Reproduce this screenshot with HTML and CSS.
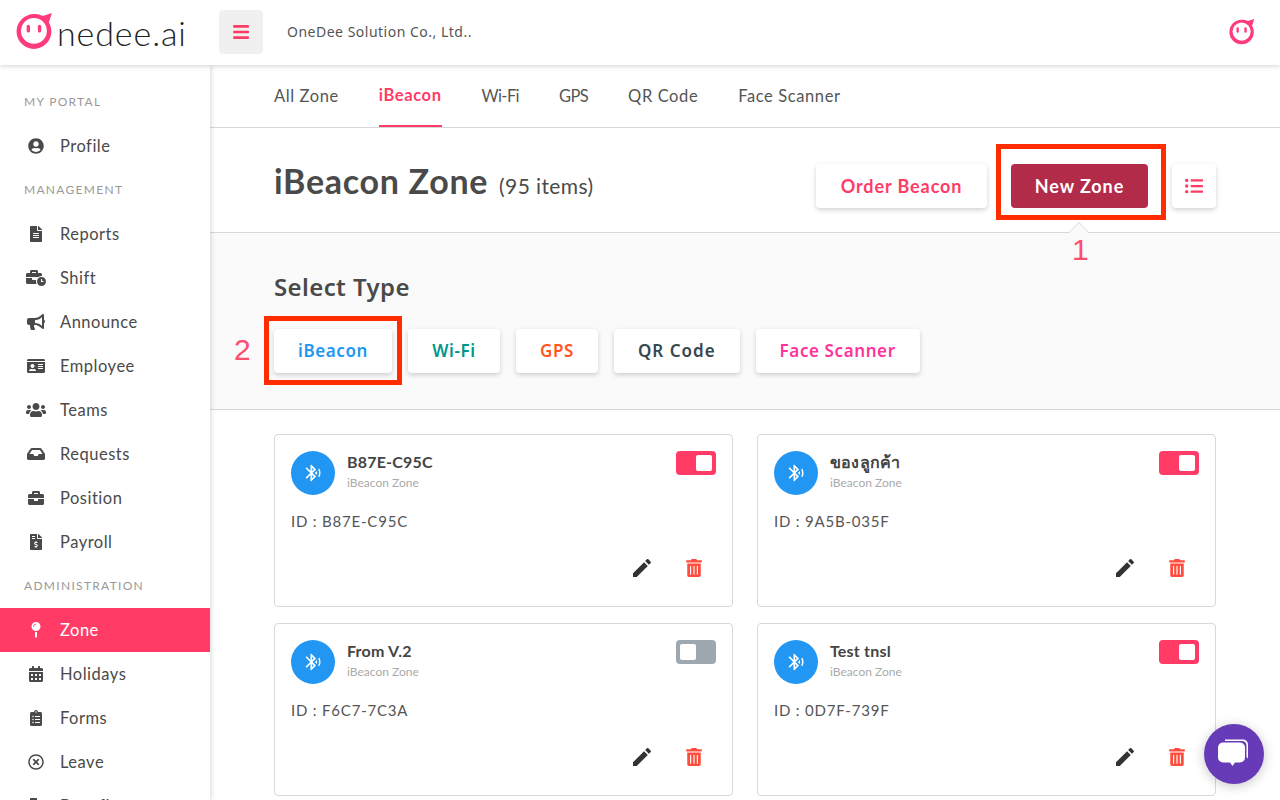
FILE: index.html
```html
<!DOCTYPE html>
<html lang="en">
<head>
  <meta charset="UTF-8" />
  <title>iBeacon Zone</title>
  <link rel="stylesheet" href="styles.css">
</head>
<body>
  <svg class="defs" width="0" height="0">
    <symbol id="i-face" viewBox="4 3 33 33">
      <path d="M20 4a15.500 15.500 0 1 0 15.500 15.500c0-3-.8-5.700-2.200-8l2.700-8.500-8 2.600A15.500 15.500 0 0 0 20 4z" fill="#ff3b7b"/>
      <circle cx="20" cy="19" r="11.500" fill="#fff"/>
      <rect x="13.500" y="13.500" width="3" height="7" rx="1.500" fill="#ff3b7b"/>
      <rect x="23.500" y="13.500" width="3" height="7" rx="1.500" fill="#ff3b7b"/>
    </symbol>
    <symbol id="i-bt" viewBox="0 0 24 24">
      <path d="M14.240 12.010l2.320 2.320c.28-.72.44-1.510.44-2.330 0-.82-.16-1.590-.43-2.310l-2.330 2.320zm5.290-5.300l-1.260 1.260c.63 1.210.98 2.570.98 4.020s-.36 2.820-.98 4.020l1.200 1.200c.97-1.540 1.540-3.360 1.540-5.310-.01-1.890-.55-3.670-1.480-5.190zm-3.820 1L10 2H9v7.590L4.410 5 3 6.410 8.590 12 3 17.590 4.410 19 9 14.410V22h1l5.710-5.710-4.300-4.290 4.300-4.290zM11 5.830l1.880 1.880L11 9.590V5.830zm1.880 10.460L11 18.170v-3.760l1.880 1.880z"/>
    </symbol>
    <symbol id="i-edit" viewBox="0 0 24 24">
      <path d="M3 17.250V21h3.750L17.810 9.940l-3.750-3.750L3 17.250zM20.710 7.040c.39-.39.39-1.020 0-1.410l-2.340-2.340c-.39-.39-1.020-.39-1.410 0l-1.830 1.830 3.750 3.750 1.830-1.830z"/>
    </symbol>
    <symbol id="i-trash" viewBox="0 0 448 512">
      <path d="M32 464a48 48 0 0 0 48 48h288a48 48 0 0 0 48-48V128H32zm272-256a16 16 0 0 1 32 0v224a16 16 0 0 1-32 0zm-96 0a16 16 0 0 1 32 0v224a16 16 0 0 1-32 0zm-96 0a16 16 0 0 1 32 0v224a16 16 0 0 1-32 0zM432 32H312l-9.400-18.700A24 24 0 0 0 281.100 0H166.800a23.720 23.720 0 0 0-21.400 13.300L136 32H16A16 16 0 0 0 0 48v32a16 16 0 0 0 16 16h416a16 16 0 0 0 16-16V48a16 16 0 0 0-16-16z"/>
    </symbol>
  </svg>

  <header class="topbar">
    <div class="logo">
      <svg class="logo-face"><use href="#i-face"/></svg>
      <span class="logo-text">nedee.ai</span>
    </div>
    <button class="menu-btn">
      <svg viewBox="0 0 448 512"><path d="M16 132h416c8.837 0 16-7.163 16-16V76c0-8.837-7.163-16-16-16H16C7.163 60 0 67.163 0 76v40c0 8.837 7.163 16 16 16zm0 160h416c8.837 0 16-7.163 16-16v-40c0-8.837-7.163-16-16-16H16c-8.837 0-16 7.163-16 16v40c0 8.837 7.163 16 16 16zm0 160h416c8.837 0 16-7.163 16-16v-40c0-8.837-7.163-16-16-16H16c-8.837 0-16 7.163-16 16v40c0 8.837 7.163 16 16 16z"/></svg>
    </button>
    <span class="company">OneDee Solution Co., Ltd..</span>
    <svg class="avatar"><use href="#i-face"/></svg>
  </header>

  <div class="layout">
    <aside class="sidebar">
      <div class="side-label">MY PORTAL</div>
      <a class="side-item"><span class="side-icon"><svg viewBox="0 0 496 512"><path d="M248 8C111 8 0 119 0 256s111 248 248 248 248-111 248-248S385 8 248 8zm0 96c48.600 0 88 39.400 88 88s-39.400 88-88 88-88-39.400-88-88 39.400-88 88-88zm0 344c-58.700 0-111.300-26.600-146.500-68.200 18.800-35.400 55.600-59.800 98.500-59.800 2.400 0 4.800.4 7.100 1.100 13 4.200 26.600 6.900 40.900 6.900 14.300 0 28-2.700 40.900-6.900 2.300-.7 4.700-1.100 7.100-1.100 42.900 0 79.700 24.400 98.500 59.800C359.300 421.400 306.700 448 248 448z"/></svg></span>Profile</a>
      <div class="side-label">MANAGEMENT</div>
      <a class="side-item"><span class="side-icon"><svg viewBox="0 0 384 512"><path d="M224 136V0H24C10.700 0 0 10.700 0 24v464c0 13.300 10.700 24 24 24h336c13.300 0 24-10.700 24-24V160H248c-13.200 0-24-10.800-24-24zm64 236c0 6.600-5.400 12-12 12H108c-6.600 0-12-5.400-12-12v-8c0-6.600 5.400-12 12-12h168c6.600 0 12 5.400 12 12v8zm0-64c0 6.600-5.400 12-12 12H108c-6.600 0-12-5.400-12-12v-8c0-6.600 5.400-12 12-12h168c6.600 0 12 5.400 12 12v8zm0-72v8c0 6.600-5.400 12-12 12H108c-6.600 0-12-5.400-12-12v-8c0-6.600 5.400-12 12-12h168c6.600 0 12 5.400 12 12zm96-114.100v6.100H256V0h6.100c6.400 0 12.500 2.500 17 7l97.900 98c4.500 4.500 7 10.600 7 16.900z"/></svg></span>Reports</a>
      <a class="side-item"><span class="side-icon"><svg class="wide" viewBox="0 0 640 512"><path d="M496 224c-79.590 0-144 64.410-144 144s64.410 144 144 144 144-64.410 144-144-64.410-144-144-144zm64 150.290c0 5.340-4.370 9.710-9.710 9.710h-60.570c-5.340 0-9.710-4.370-9.710-9.710v-76.570c0-5.340 4.370-9.710 9.710-9.710h12.570c5.340 0 9.710 4.370 9.710 9.710V352h38.290c5.340 0 9.710 4.370 9.710 9.710v12.580zM496 192c5.400 0 10.720.33 16 .81V144c0-25.600-22.400-48-48-48h-80V48c0-25.600-22.400-48-48-48H176c-25.600 0-48 22.400-48 48v48H48c-25.600 0-48 22.400-48 48v80h395.120c28.600-20.090 63.350-32 100.880-32zM320 96H192V64h128v32zm6.820 224H208c-8.840 0-16-7.160-16-16v-48H0v144c0 25.600 22.400 48 48 48h291.430C327.100 423.960 320 396.820 320 368c0-16.660 2.480-32.720 6.820-48z"/></svg></span>Shift</a>
      <a class="side-item"><span class="side-icon"><svg viewBox="0 0 576 512"><path d="M576 240c0-23.630-12.950-44.040-32-55.120V32.010C544 23.260 537.020 0 512 0c-7.120 0-14.190 2.380-19.980 7.020l-85.030 68.030C364.280 109.190 310.660 128 256 128H64c-35.350 0-64 28.650-64 64v96c0 35.350 28.650 64 64 64h33.700c-1.390 10.480-2.180 21.140-2.180 32 0 39.770 9.260 77.350 25.560 110.940 5.190 10.690 16.520 17.060 28.400 17.060h74.280c26.050 0 41.690-29.840 25.900-50.560-16.400-21.520-26.150-48.360-26.150-77.440 0-11.110 1.620-21.790 4.410-32H256c54.660 0 108.280 18.810 150.980 52.950l85.030 68.030a32.023 32.023 0 0 0 19.980 7.020c24.920 0 32-22.780 32-32V295.130C563.050 284.040 576 263.630 576 240zm-96 141.420l-33.050-26.440C392.950 311.780 325.120 288 256 288v-96c69.120 0 136.950-23.780 190.950-66.980L480 98.580v282.840z"/></svg></span>Announce</a>
      <a class="side-item"><span class="side-icon"><svg viewBox="0 0 576 512"><path d="M528 32H48C21.500 32 0 53.500 0 80v16h576V80c0-26.500-21.500-48-48-48zM0 432c0 26.500 21.500 48 48 48h480c26.500 0 48-21.500 48-48V128H0v304zm352-232c0-4.400 3.600-8 8-8h144c4.400 0 8 3.600 8 8v16c0 4.400-3.600 8-8 8H360c-4.400 0-8-3.600-8-8v-16zm0 64c0-4.400 3.600-8 8-8h144c4.400 0 8 3.600 8 8v16c0 4.400-3.600 8-8 8H360c-4.400 0-8-3.600-8-8v-16zm0 64c0-4.400 3.600-8 8-8h144c4.400 0 8 3.600 8 8v16c0 4.400-3.600 8-8 8H360c-4.400 0-8-3.600-8-8v-16zM176 192c35.300 0 64 28.700 64 64s-28.700 64-64 64-64-28.700-64-64 28.700-64 64-64zM67.100 396.200C75.500 370.500 99.600 352 128 352h8.200c12.300 5.100 25.700 8 39.800 8s27.600-2.900 39.800-8h8.200c28.400 0 52.500 18.500 60.900 44.200 3.200 9.900-5.200 19.800-15.600 19.800H82.700c-10.400 0-18.800-10-15.600-19.800z"/></svg></span>Employee</a>
      <a class="side-item"><span class="side-icon"><svg class="wide" viewBox="0 0 640 512"><path d="M96 224c35.300 0 64-28.700 64-64s-28.700-64-64-64-64 28.700-64 64 28.700 64 64 64zm448 0c35.300 0 64-28.700 64-64s-28.700-64-64-64-64 28.700-64 64 28.700 64 64 64zm32 32h-64c-17.600 0-33.500 7.100-45.100 18.600 40.300 22.100 68.900 62 75.100 109.400h66c17.700 0 32-14.300 32-32v-32c0-35.300-28.700-64-64-64zm-256 0c61.900 0 112-50.100 112-112S381.900 32 320 32 208 82.100 208 144s50.100 112 112 112zm76.800 32h-8.300c-20.800 10-43.900 16-68.500 16s-47.600-6-68.500-16h-8.300C179.600 288 128 339.600 128 403.200V432c0 26.500 21.500 48 48 48h288c26.500 0 48-21.500 48-48v-28.800c0-63.600-51.600-115.200-115.200-115.200zm-223.700-13.400C161.500 263.100 145.600 256 128 256H64c-35.300 0-64 28.700-64 64v32c0 17.700 14.300 32 32 32h65.900c6.300-47.400 34.900-87.300 75.200-109.400z"/></svg></span>Teams</a>
      <a class="side-item"><span class="side-icon"><svg viewBox="0 0 576 512"><path d="M567.938 243.908L462.250 85.374A48.003 48.003 0 0 0 422.311 64H153.689a48 48 0 0 0-39.938 21.374L8.062 243.908A47.994 47.994 0 0 0 0 270.533V400c0 26.510 21.490 48 48 48h480c26.510 0 48-21.490 48-48V270.533a47.994 47.994 0 0 0-8.062-26.625zM162.252 128h251.497l85.333 128H376l-32 64H232l-32-64H76.918l85.334-128z"/></svg></span>Requests</a>
      <a class="side-item"><span class="side-icon"><svg viewBox="0 0 512 512"><path d="M320 336c0 8.840-7.160 16-16 16h-96c-8.840 0-16-7.160-16-16v-48H0v144c0 25.600 22.400 48 48 48h416c25.600 0 48-22.400 48-48V288H320v48zm144-208h-80V80c0-25.600-22.400-48-48-48H176c-25.600 0-48 22.400-48 48v48H48c-25.600 0-48 22.400-48 48v80h512v-80c0-25.600-22.400-48-48-48zm-144 0H192V96h128v32z"/></svg></span>Position</a>
      <a class="side-item"><span class="side-icon"><svg viewBox="0 0 384 512"><path d="M377 105L279.100 7c-4.500-4.500-10.600-7-17-7H256v128h128v-6.100c0-6.300-2.500-12.400-7-16.900zm-153 31V0H24C10.700 0 0 10.700 0 24v464c0 13.300 10.700 24 24 24h336c13.300 0 24-10.700 24-24V160H248c-13.200 0-24-10.800-24-24zM64 72c0-4.420 3.580-8 8-8h80c4.420 0 8 3.580 8 8v16c0 4.420-3.580 8-8 8H72c-4.420 0-8-3.580-8-8V72zm0 80v-16c0-4.420 3.580-8 8-8h80c4.420 0 8 3.580 8 8v16c0 4.420-3.580 8-8 8H72c-4.420 0-8-3.580-8-8zm144 263.880V440c0 4.420-3.580 8-8 8h-16c-4.420 0-8-3.580-8-8v-24.290c-11.290-.58-22.270-4.520-31.370-11.350-3.900-2.930-4.100-8.770-.57-12.140l11.750-11.210c2.770-2.640 6.890-2.760 10.130-.73 3.870 2.420 8.260 3.720 12.820 3.720h28.110c6.500 0 11.800-5.920 11.800-13.190 0-5.950-3.610-11.190-8.770-12.730l-45-13.500c-18.590-5.580-31.580-23.420-31.580-43.390 0-24.520 19.050-44.440 42.670-45.070V232c0-4.420 3.580-8 8-8h16c4.420 0 8 3.580 8 8v24.290c11.290.58 22.270 4.510 31.370 11.350 3.900 2.930 4.100 8.770.57 12.140l-11.750 11.210c-2.770 2.640-6.890 2.760-10.130.73-3.870-2.430-8.260-3.720-12.820-3.720h-28.110c-6.500 0-11.800 5.920-11.800 13.190 0 5.950 3.610 11.190 8.770 12.730l45 13.500c18.590 5.580 31.580 23.420 31.580 43.390 0 24.530-19.050 44.440-42.670 45.070z"/></svg></span>Payroll</a>
      <div class="side-label">ADMINISTRATION</div>
      <a class="side-item active"><span class="side-icon"><svg viewBox="0 0 288 512"><path d="M112 316.940v156.690l22.020 33.020c4.750 7.120 15.220 7.120 19.970 0L176 473.630V316.940c-10.390 1.920-21.060 3.060-32 3.060s-21.610-1.140-32-3.060zM144 0C64.470 0 0 64.470 0 144s64.470 144 144 144 144-64.470 144-144S223.530 0 144 0zm0 76c-37.500 0-68 30.500-68 68 0 6.620-5.380 12-12 12s-12-5.380-12-12c0-50.730 41.280-92 92-92 6.620 0 12 5.380 12 12s-5.380 12-12 12z"/></svg></span>Zone</a>
      <a class="side-item"><span class="side-icon"><svg viewBox="0 0 448 512"><path d="M0 464c0 26.500 21.500 48 48 48h352c26.500 0 48-21.500 48-48V192H0v272zm320-196c0-6.600 5.400-12 12-12h40c6.600 0 12 5.400 12 12v40c0 6.600-5.400 12-12 12h-40c-6.600 0-12-5.400-12-12v-40zm0 128c0-6.600 5.400-12 12-12h40c6.600 0 12 5.400 12 12v40c0 6.600-5.400 12-12 12h-40c-6.600 0-12-5.400-12-12v-40zM192 268c0-6.600 5.400-12 12-12h40c6.600 0 12 5.400 12 12v40c0 6.600-5.400 12-12 12h-40c-6.600 0-12-5.400-12-12v-40zm0 128c0-6.600 5.400-12 12-12h40c6.600 0 12 5.400 12 12v40c0 6.600-5.400 12-12 12h-40c-6.600 0-12-5.400-12-12v-40zM64 268c0-6.600 5.400-12 12-12h40c6.600 0 12 5.400 12 12v40c0 6.600-5.400 12-12 12H76c-6.600 0-12-5.400-12-12v-40zm0 128c0-6.600 5.400-12 12-12h40c6.600 0 12 5.400 12 12v40c0 6.600-5.400 12-12 12H76c-6.600 0-12-5.400-12-12v-40zM400 64h-48V16c0-8.800-7.200-16-16-16h-32c-8.800 0-16 7.200-16 16v48H160V16c0-8.800-7.200-16-16-16h-32c-8.800 0-16 7.200-16 16v48H48C21.500 64 0 85.500 0 112v48h448v-48c0-26.500-21.500-48-48-48z"/></svg></span>Holidays</a>
      <a class="side-item"><span class="side-icon"><svg viewBox="0 0 384 512"><path d="M336 64h-80c0-35.300-28.700-64-64-64s-64 28.700-64 64H48C21.500 64 0 85.500 0 112v352c0 26.500 21.500 48 48 48h288c26.500 0 48-21.500 48-48V112c0-26.500-21.500-48-48-48zM96 424c-13.300 0-24-10.700-24-24s10.700-24 24-24 24 10.700 24 24-10.700 24-24 24zm0-96c-13.300 0-24-10.700-24-24s10.700-24 24-24 24 10.700 24 24-10.700 24-24 24zm0-96c-13.300 0-24-10.700-24-24s10.700-24 24-24 24 10.700 24 24-10.700 24-24 24zm96-192c13.300 0 24 10.700 24 24s-10.700 24-24 24-24-10.700-24-24 10.700-24 24-24zm128 368c0 4.400-3.600 8-8 8H168c-4.400 0-8-3.600-8-8v-16c0-4.400 3.600-8 8-8h144c4.400 0 8 3.600 8 8v16zm0-96c0 4.400-3.600 8-8 8H168c-4.400 0-8-3.600-8-8v-16c0-4.400 3.600-8 8-8h144c4.400 0 8 3.600 8 8v16zm0-96c0 4.400-3.600 8-8 8H168c-4.400 0-8-3.600-8-8v-16c0-4.400 3.600-8 8-8h144c4.400 0 8 3.600 8 8v16z"/></svg></span>Forms</a>
      <a class="side-item"><span class="side-icon"><svg viewBox="0 0 512 512"><path d="M256 8C119 8 8 119 8 256s111 248 248 248 248-111 248-248S393 8 256 8zm0 448c-110.500 0-200-89.500-200-200S145.500 56 256 56s200 89.500 200 200-89.500 200-200 200zm101.800-262.200L295.600 256l62.200 62.200c4.700 4.700 4.700 12.300 0 17l-22.600 22.600c-4.700 4.700-12.300 4.700-17 0L256 295.600l-62.200 62.200c-4.700 4.700-12.300 4.700-17 0l-22.600-22.600c-4.700-4.700-4.700-12.300 0-17l62.200-62.200-62.200-62.200c-4.700-4.700-4.700-12.300 0-17l22.600-22.600c4.700-4.700 12.300-4.700 17 0l62.200 62.200 62.200-62.200c4.700-4.700 12.300-4.700 17 0l22.600 22.600c4.700 4.700 4.700 12.300 0 17z"/></svg></span>Leave</a>
      <a class="side-item"><span class="side-icon"><svg viewBox="0 0 384 512"><path d="M224 136V0H24C10.700 0 0 10.700 0 24v464c0 13.300 10.700 24 24 24h336c13.300 0 24-10.700 24-24V160H248c-13.200 0-24-10.800-24-24z"/></svg></span>Benefits</a>
    </aside>

    <main class="content">
      <nav class="tabs">
        <a class="tab">All Zone</a>
        <a class="tab active">iBeacon</a>
        <a class="tab tab-narrow">Wi-Fi</a>
        <a class="tab tab-narrow">GPS</a>
        <a class="tab">QR Code</a>
        <a class="tab">Face Scanner</a>
      </nav>

      <section class="title-row">
        <h1>iBeacon Zone <small>(95 items)</small></h1>
        <div class="title-actions">
          <button class="btn btn-white">Order Beacon</button>
          <div class="mark-wrap">
            <button class="btn btn-primary">New Zone</button>
            <span class="mark mark-new"></span>
            <span class="mark-num num-new">1</span>
          </div>
          <button class="btn btn-icon">
            <svg viewBox="0 0 512 512"><path d="M48 48a48 48 0 1 0 48 48 48 48 0 0 0-48-48zm0 160a48 48 0 1 0 48 48 48 48 0 0 0-48-48zm0 160a48 48 0 1 0 48 48 48 48 0 0 0-48-48zm448 16H176a16 16 0 0 0-16 16v32a16 16 0 0 0 16 16h320a16 16 0 0 0 16-16v-32a16 16 0 0 0-16-16zm0-320H176a16 16 0 0 0-16 16v32a16 16 0 0 0 16 16h320a16 16 0 0 0 16-16V80a16 16 0 0 0-16-16zm0 160H176a16 16 0 0 0-16 16v32a16 16 0 0 0 16 16h320a16 16 0 0 0 16-16v-32a16 16 0 0 0-16-16z"/></svg>
          </button>
        </div>
      </section>

      <section class="type-panel">
        <span class="caret"></span>
        <h2>Select Type</h2>
        <div class="type-list">
          <div class="mark-wrap">
            <button class="type-btn t-blue">iBeacon</button>
            <span class="mark mark-type"></span>
            <span class="mark-num num-type">2</span>
          </div>
          <button class="type-btn t-green">Wi-Fi</button>
          <button class="type-btn t-orange">GPS</button>
          <button class="type-btn t-slate">QR Code</button>
          <button class="type-btn t-pink">Face Scanner</button>
        </div>
      </section>

      <section class="cards">
        <article class="card">
          <div class="card-head">
            <span class="card-icon"><svg><use href="#i-bt"/></svg></span>
            <div class="card-name"><b>B87E-C95C</b><small>iBeacon Zone</small></div>
            <span class="toggle on"><i></i></span>
          </div>
          <p class="card-id">ID : B87E-C95C</p>
          <div class="card-actions">
            <svg class="ic-edit"><use href="#i-edit"/></svg>
            <svg class="ic-trash"><use href="#i-trash"/></svg>
          </div>
        </article>
        <article class="card">
          <div class="card-head">
            <span class="card-icon"><svg><use href="#i-bt"/></svg></span>
            <div class="card-name"><b>ของลูกค้า</b><small>iBeacon Zone</small></div>
            <span class="toggle on"><i></i></span>
          </div>
          <p class="card-id">ID : 9A5B-035F</p>
          <div class="card-actions">
            <svg class="ic-edit"><use href="#i-edit"/></svg>
            <svg class="ic-trash"><use href="#i-trash"/></svg>
          </div>
        </article>
        <article class="card">
          <div class="card-head">
            <span class="card-icon"><svg><use href="#i-bt"/></svg></span>
            <div class="card-name"><b>From V.2</b><small>iBeacon Zone</small></div>
            <span class="toggle off"><i></i></span>
          </div>
          <p class="card-id">ID : F6C7-7C3A</p>
          <div class="card-actions">
            <svg class="ic-edit"><use href="#i-edit"/></svg>
            <svg class="ic-trash"><use href="#i-trash"/></svg>
          </div>
        </article>
        <article class="card">
          <div class="card-head">
            <span class="card-icon"><svg><use href="#i-bt"/></svg></span>
            <div class="card-name"><b>Test tnsl</b><small>iBeacon Zone</small></div>
            <span class="toggle on"><i></i></span>
          </div>
          <p class="card-id">ID : 0D7F-739F</p>
          <div class="card-actions">
            <svg class="ic-edit"><use href="#i-edit"/></svg>
            <svg class="ic-trash"><use href="#i-trash"/></svg>
          </div>
        </article>
      </section>
    </main>
  </div>

  <button class="chat-btn">
    <svg viewBox="0 0 36 36">
      <path d="M9 3.500h18a5 5 0 0 1 5 5v14c-.6-.6-1-1.200-1.500-1.500V9.500a4.500 4.500 0 0 0-4.500-4.500H9z" fill="#fff"/>
      <path d="M7 6.500h17a5 5 0 0 1 5 5v10a5 5 0 0 1-5 5h-5l-2.500 3.500-2.500-3.500H7a5 5 0 0 1-5-5v-10a5 5 0 0 1 5-5z" fill="#fff"/>
    </svg>
  </button>
</body>
</html>
```

FILE: styles.css
```css
* {
  box-sizing: border-box;
}

html, body {
  margin: 0;
  height: 100%;
  overflow: hidden;
}

body {
  font-family: Lato, "Noto Sans", sans-serif;
  color: #4a4a4a;
  background: #fff;
}

.defs {
  position: absolute;
}

button {
  font-family: inherit;
  border: 0;
  cursor: pointer;
}

/* top bar */
.topbar {
  height: 65px;
  padding-bottom: 2px;
  display: flex;
  align-items: center;
  background: #fff;
  box-shadow: 0 1px 5px rgba(0, 0, 0, .18);
  position: relative;
  z-index: 3;
}

.logo {
  width: 219px;
  padding-left: 16px;
  display: flex;
  align-items: center;
}

.logo-face {
  width: 37px;
  height: 37px;
  flex: none;
}

.logo-text {
  font-weight: 300;
  font-size: 34px;
  letter-spacing: .9px;
  color: #222;
  margin-left: 4px;
  margin-top: 2px;
}

.menu-btn {
  width: 44px;
  height: 44px;
  background: #f0f0f0;
  border-radius: 4px;
  display: flex;
  align-items: center;
  justify-content: center;
  padding: 0;
}

.menu-btn svg {
  width: 16px;
  height: 18px;
  fill: #ff3b66;
}

.company {
  margin-left: 24px;
  font-family: "Noto Sans", sans-serif;
  font-size: 14px;
  color: #555;
  letter-spacing: .5px;
}

.avatar {
  width: 26px;
  height: 26px;
  margin-left: auto;
  margin-right: 25px;
}

.layout {
  display: flex;
  height: calc(100vh - 65px);
}

/* sidebar */
.sidebar {
  width: 210px;
  flex: none;
  overflow: hidden;
  background: #fff;
  padding-top: 15px;
  box-shadow: 1px 0 5px rgba(0, 0, 0, .16);
  position: relative;
  z-index: 2;
}

.side-label {
  height: 44px;
  padding: 0 0 2px 24px;
  display: flex;
  align-items: center;
  font-size: 12px;
  letter-spacing: 1.3px;
  color: #999;
}

.side-item {
  height: 44px;
  display: flex;
  align-items: center;
  font-size: 16.500px;
  letter-spacing: .5px;
  color: #4a4a4a;
}

.side-icon {
  width: 60px;
  padding-left: 26px;
  flex: none;
  display: flex;
}

.side-icon svg {
  width: 20px;
  height: 16px;
  fill: #4a4a4a;
}

.side-item.active {
  background: #ff3b66;
  color: #fff;
}

.side-item.active svg {
  fill: #fff;
}

/* main column */
.content {
  flex: 1;
  min-width: 0;
  overflow: hidden;
}

.tabs {
  height: 63px;
  display: flex;
  gap: 40px;
  padding-left: 64px;
  border-bottom: 1px solid #d8d8d8;
}

.tab {
  height: 62px;
  display: flex;
  align-items: center;
  font-size: 16.500px;
  letter-spacing: .6px;
  color: #555;
}

.tab-narrow {
  letter-spacing: -.6px;
}

.tab.active {
  color: #ff3b66;
  font-weight: 700;
  border-bottom: 2px solid #ff3b66;
}

.title-row {
  height: 105px;
  padding: 12px 64px 0;
  display: flex;
  align-items: center;
  justify-content: space-between;
  border-bottom: 1px solid #d8d8d8;
}

h1 {
  margin: 0 0 12px;
  font-size: 34px;
  font-weight: 700;
  letter-spacing: .7px;
  color: #4a4a4a;
}

h1 small {
  font-size: 21px;
  font-weight: 400;
  letter-spacing: .4px;
  margin-left: 2px;
}

.title-actions {
  display: flex;
  align-items: center;
  gap: 24px;
}

.btn {
  height: 44px;
  border-radius: 4px;
  font-size: 18px;
  font-weight: 700;
  letter-spacing: .9px;
}

.btn-white {
  width: 171px;
  background: #fff;
  color: #ff3b66;
  box-shadow: 0 2px 5px rgba(0, 0, 0, .18);
}

.btn-primary {
  width: 137px;
  background: #b22b48;
  color: #fff;
  display: block;
}

.btn-icon {
  width: 44px;
  background: #fff;
  box-shadow: 0 2px 5px rgba(0, 0, 0, .18);
  padding: 0;
  display: flex;
  align-items: center;
  justify-content: center;
}

.btn-icon svg {
  width: 18px;
  height: 18px;
  fill: #ff3b66;
}

/* annotations laid over the screenshot */
.mark-wrap {
  position: relative;
}

.mark {
  position: absolute;
  z-index: 2;
  border: 5px solid #ff2d00;
  pointer-events: none;
}

.mark-new {
  left: -15px;
  right: -18px;
  top: -20px;
  bottom: -12px;
}

.mark-type {
  left: -10px;
  right: -10px;
  top: -13px;
  bottom: -12px;
}

.mark-num {
  position: absolute;
  z-index: 2;
  font-family: "Liberation Sans", sans-serif;
  font-size: 30px;
  color: #ff4d6d;
  line-height: 34px;
}

.num-new {
  left: 61px;
  top: 69px;
}

.num-type {
  left: -40px;
  top: 4px;
}

/* select type */
.type-panel {
  position: relative;
  height: 177px;
  padding: 38px 64px 0;
  background: #fafafa;
  border-bottom: 1px solid #d8d8d8;
}

.caret {
  position: absolute;
  left: 859px;
  top: -11px;
  width: 20px;
  height: 20px;
  background: #fafafa;
  border-left: 1px solid #d8d8d8;
  border-top: 1px solid #d8d8d8;
  transform: rotate(45deg) scale(.7);
}

h2 {
  margin: 0 0 26px;
  font-family: "Noto Sans", sans-serif;
  font-size: 24px;
  line-height: 32px;
  font-weight: 600;
  letter-spacing: .4px;
  color: #4a4a4a;
}

.type-list {
  display: flex;
  gap: 16px;
}

.type-btn {
  height: 44px;
  padding: 0 24px 2px;
  background: #fff;
  border-radius: 4px;
  font-family: "Noto Sans", sans-serif;
  font-size: 17px;
  font-weight: 600;
  letter-spacing: .6px;
  box-shadow: 0 2px 5px rgba(0, 0, 0, .18);
  display: block;
}

.t-blue { color: #2196f3; width: 118px; }
.t-green { color: #009688; width: 92px; }
.t-orange { color: #ff5722; }
.t-slate { color: #37474f; letter-spacing: 1px; }
.t-pink { color: #ff339a; }

/* zone cards */
.cards {
  padding: 24px 64px;
  display: grid;
  grid-template-columns: 1fr 1fr;
  gap: 16px 24px;
}

.card {
  height: 173px;
  border: 1px solid #d8d8d8;
  border-radius: 4px;
  padding: 16px;
  background: #fff;
}

.card-head {
  display: flex;
  align-items: flex-start;
}

.card-icon {
  width: 44px;
  height: 44px;
  flex: none;
  border-radius: 50%;
  background: #2196f3;
  display: flex;
  align-items: center;
  justify-content: center;
}

.card-icon svg {
  width: 20px;
  height: 20px;
  fill: #fff;
}

.card-name {
  margin-left: 12px;
  flex: 1;
}

.card-name b {
  display: block;
  font-size: 16px;
  line-height: 22px;
  letter-spacing: .2px;
  color: #444;
}

.card-name small {
  display: block;
  font-size: 12px;
  line-height: 16px;
  color: #aaa;
  margin-top: 2px;
}

.toggle {
  width: 40px;
  height: 24px;
  border-radius: 4px;
  padding: 4px;
  display: flex;
}

.toggle i {
  width: 16px;
  height: 16px;
  background: #fff;
  border-radius: 2px;
}

.toggle.on {
  background: #ff3b66;
  justify-content: flex-end;
}

.toggle.off {
  background: #9ea7ad;
}

.card-id {
  margin: 15px 0 0;
  font-size: 15px;
  line-height: 22px;
  letter-spacing: .8px;
  color: #555;
}

.card-actions {
  margin-top: 24px;
  display: flex;
  justify-content: flex-end;
  align-items: center;
  gap: 32px;
  padding-right: 14px;
}

.ic-edit {
  width: 24px;
  height: 24px;
  fill: #333;
}

.ic-trash {
  width: 16px;
  height: 18px;
  fill: #ff4d3d;
}

.chat-btn {
  position: fixed;
  right: 16px;
  bottom: 16px;
  width: 60px;
  height: 60px;
  border-radius: 50%;
  background: #673ab7;
  padding: 0;
  box-shadow: 0 2px 12px rgba(0, 0, 0, .22);
  display: flex;
  align-items: center;
  justify-content: center;
}

.chat-btn svg {
  width: 36px;
  height: 36px;
}
```
